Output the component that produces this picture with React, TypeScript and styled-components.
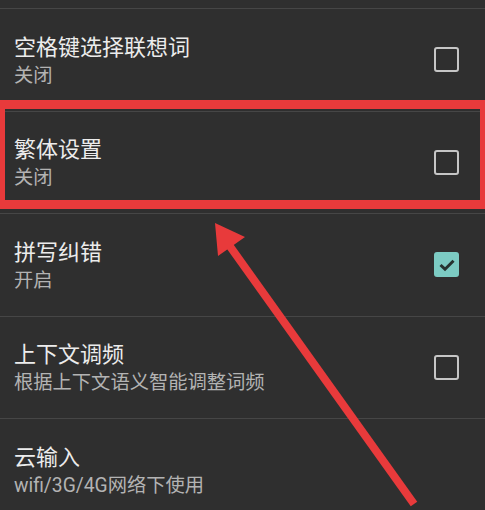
import styled, { createGlobalStyle } from 'styled-components'

const GlobalStyle = createGlobalStyle`
  html, body {
    margin: 0;
    padding: 0;
    background: #2f2f2f;
    overflow: hidden;
  }
  body {
    font-family: Roboto, "Noto Sans CJK SC", sans-serif;
  }
`

const Screen = styled.div`
  position: relative;
  width: 485px;
  height: 510px;
  padding-top: 8px;
  box-sizing: border-box;
  background: #2f2f2f;
  overflow: hidden;
`

const List = styled.div`
  display: flex;
  flex-direction: column;
`

const Row = styled.div`
  display: flex;
  align-items: center;
  justify-content: space-between;
  height: 101.5px;
  padding: 0 26px 0 14px;
  border-top: 1px solid #464646;
  flex-shrink: 0;
`

const Texts = styled.div`
  display: flex;
  flex-direction: column;
  padding-top: 4px;
`

const Title = styled.div`
  font-size: 22px;
  line-height: 28px;
  color: #ececec;
`

const Summary = styled.div`
  font-size: 19.3px;
  line-height: 28px;
  color: #b3b3b3;
`

const Box = styled.div<{ $checked?: boolean }>`
  display: flex;
  align-items: center;
  justify-content: center;
  width: 25px;
  height: 25px;
  box-sizing: border-box;
  border-radius: 3px;
  border: ${(p) => (p.$checked ? 'none' : '2.5px solid #c6c6c6')};
  background: ${(p) => (p.$checked ? '#7ccbc3' : 'transparent')};
`

const Highlight = styled.div`
  position: absolute;
  left: 0;
  right: 0;
  top: 100px;
  height: 109px;
  box-sizing: border-box;
  border: solid #e83a3b;
  border-width: 9px 5px;
  pointer-events: none;
`

const Arrow = styled.svg`
  position: absolute;
  left: 0;
  top: 0;
  pointer-events: none;
`

type Item = { title: string; summary: string; checked?: boolean; toggle?: boolean }

const items: Item[] = [
  { title: '空格键选择联想词', summary: '关闭', toggle: true },
  { title: '繁体设置', summary: '关闭', toggle: true },
  { title: '拼写纠错', summary: '开启', checked: true, toggle: true },
  { title: '上下文调频', summary: '根据上下文语义智能调整词频', toggle: true },
  { title: '云输入', summary: 'wifi/3G/4G网络下使用' },
]

function CheckBox({ checked }: { checked?: boolean }) {
  return (
    <Box $checked={checked}>
      {checked && (
        <svg width="18" height="14" viewBox="0 0 18 14">
          <path d="M2.5 7 L7 11.2 L15.5 2.8" fill="none" stroke="#263330" strokeWidth="3" />
        </svg>
      )}
    </Box>
  )
}

export default function App() {
  return (
    <Screen>
      <GlobalStyle />
      <List>
        {items.map((item) => (
          <Row key={item.title}>
            <Texts>
              <Title>{item.title}</Title>
              <Summary>{item.summary}</Summary>
            </Texts>
            {item.toggle && <CheckBox checked={item.checked} />}
          </Row>
        ))}
      </List>
      <Highlight />
      <Arrow width="485" height="510" viewBox="0 0 485 510">
        <line x1="229" y1="245" x2="414" y2="504" stroke="#e83a3b" strokeWidth="8" />
        <polygon points="215,223 218,256 245,237" fill="#e83a3b" />
      </Arrow>
    </Screen>
  )
}
